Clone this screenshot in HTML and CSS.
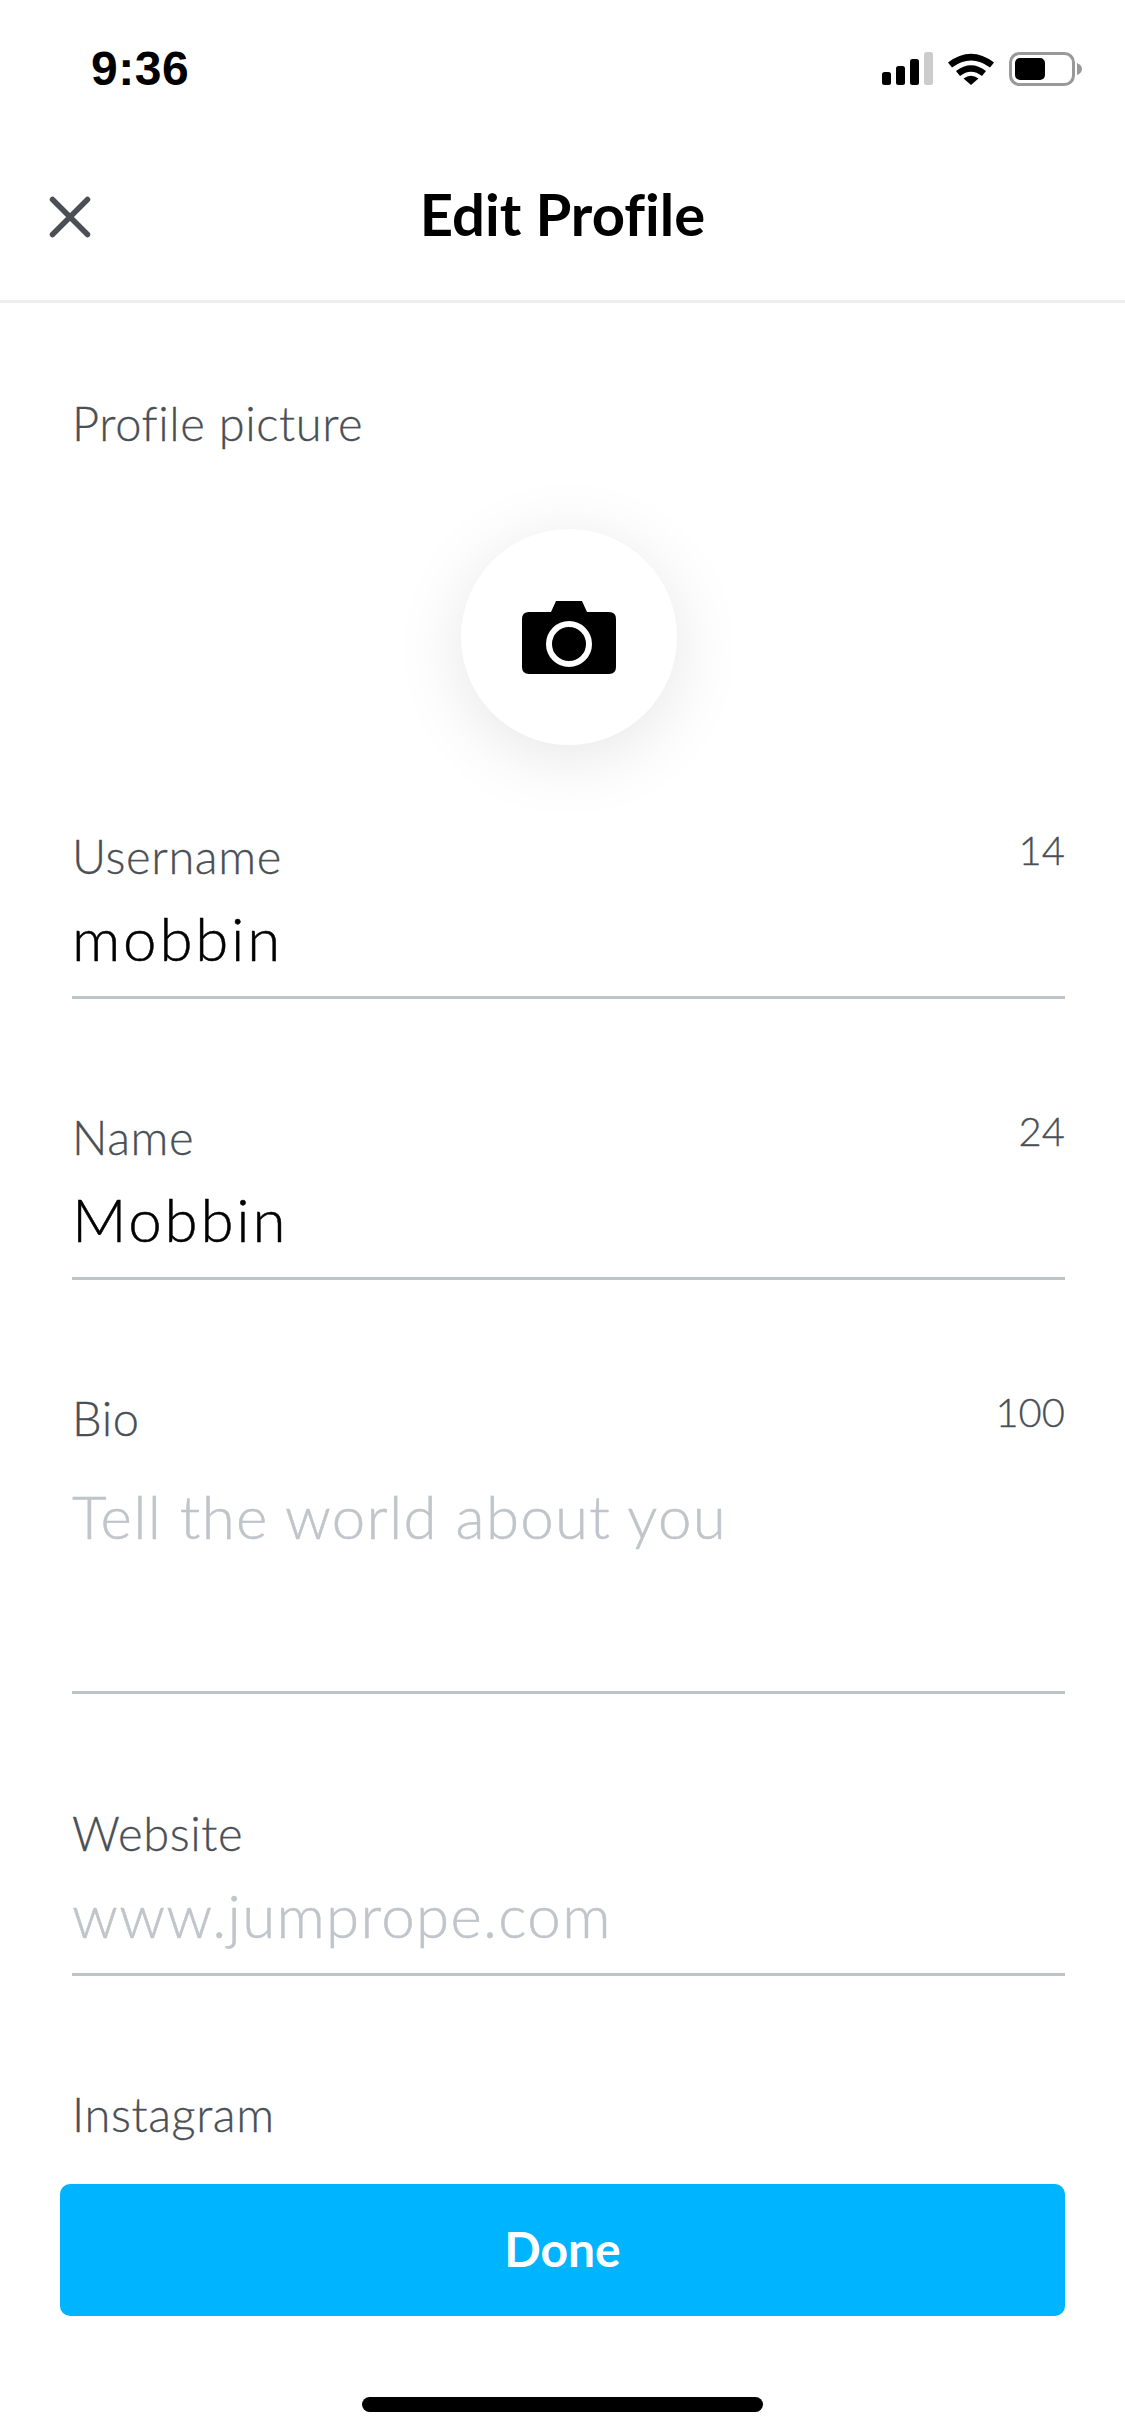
FILE: index.html
```html
<!DOCTYPE html>
<html lang="en">
<head>
  <meta charset="UTF-8">
  <meta name="viewport" content="width=device-width, initial-scale=1.0">
  <title>Edit Profile</title>
  <link rel="stylesheet" href="styles.css">
</head>
<body>
  <div class="screen">
    <div class="status-bar">
      <span class="time">9:36</span>
      <div class="status-icons">
        <svg width="51" height="33" viewBox="0 0 51 33">
          <rect x="0" y="20" width="9" height="13" rx="2.5" fill="#000"/>
          <rect x="14" y="14" width="9" height="19" rx="2.5" fill="#000"/>
          <rect x="28" y="7" width="9" height="26" rx="2.5" fill="#000"/>
          <rect x="42" y="0" width="9" height="33" rx="2.5" fill="#ccc"/>
        </svg>
        <svg width="46" height="33" viewBox="0 0 46 33">
          <path d="M0 10.500 Q23 -7 46 10.500 L42 15.500 Q23 1.500 4 15.500 Z" fill="#000"/>
          <path d="M8 19 Q23 7.500 38 19 L34 24 Q23 15.500 12 24 Z" fill="#000"/>
          <path d="M15.500 26.500 Q23 21 30.500 26.500 L23 33 Z" fill="#000"/>
        </svg>
        <svg width="73" height="34" viewBox="0 0 73 34">
          <rect x="1.500" y="1.500" width="63" height="31" rx="9" fill="none" stroke="#999" stroke-width="3"/>
          <rect x="6" y="6" width="30" height="22" rx="5" fill="#000"/>
          <path d="M68 11 Q73 13 73 17 Q73 21 68 23 Z" fill="#999"/>
        </svg>
      </div>
    </div>

    <header class="nav">
      <svg class="close" width="42" height="42" viewBox="0 0 42 42">
        <path d="M3.500 3.500 L38.500 38.500 M38.500 3.500 L3.500 38.500" stroke="#4a4f55" stroke-width="5.500" stroke-linecap="round"/>
      </svg>
      <h1>Edit Profile</h1>
    </header>

    <main class="content">
      <div class="section-label">Profile picture</div>
      <div class="avatar-row">
        <div class="avatar">
          <svg width="94" height="73" viewBox="0 0 94 73">
            <path d="M29 11 L34 0 H60 L65 11 H87 Q94 11 94 18 V66 Q94 73 87 73 H7 Q0 73 0 66 V18 Q0 11 7 11 Z" fill="#000"/>
            <circle cx="47" cy="43" r="20" fill="none" stroke="#fff" stroke-width="6"/>
          </svg>
        </div>
      </div>

      <div class="field field-username">
        <div class="field-top"><label>Username</label><span class="count">14</span></div>
        <div class="value">mobbin</div>
      </div>
      <div class="field">
        <div class="field-top"><label>Name</label><span class="count">24</span></div>
        <div class="value">Mobbin</div>
      </div>
      <div class="field field-bio">
        <div class="field-top"><label>Bio</label><span class="count">100</span></div>
        <div class="value placeholder">Tell the world about you</div>
      </div>
      <div class="field field-website">
        <div class="field-top"><label>Website</label></div>
        <div class="value placeholder">www.jumprope.com</div>
      </div>
      <div class="field">
        <div class="field-top"><label>Instagram</label></div>
      </div>
    </main>

    <div class="footer">
      <button type="button" class="btn-done">Done</button>
      <div class="home-bar"></div>
    </div>
  </div>
</body>
</html>
```

FILE: styles.css
```css
* {
  box-sizing: border-box;
}
html, body {
  margin: 0;
  padding: 0;
  background: #fff;
}
body {
  font-family: "Lato", "Open Sans", sans-serif;
  font-variant-ligatures: none;
  color: #000;
}
.screen {
  position: relative;
  width: 1125px;
  height: 2436px;
  overflow: hidden;
  display: flex;
  flex-direction: column;
}
.status-bar {
  height: 110px;
  padding: 46px 43px 0 91px;
  display: flex;
  justify-content: space-between;
  align-items: flex-start;
}
.time {
  font-family: "Liberation Sans", Arial, sans-serif;
  font-size: 48px;
  line-height: 46px;
  font-weight: 700;
  letter-spacing: 0.5px;
}
.status-icons {
  display: flex;
  align-items: flex-start;
  gap: 15px;
  padding-top: 6px;
}
.nav {
  position: relative;
  height: 193px;
  display: flex;
  align-items: center;
  justify-content: center;
  padding-top: 17px;
  border-bottom: 3px solid #eee;
}
.nav h1 {
  margin: 0;
  font-size: 58px;
  font-weight: 700;
}
.close {
  position: absolute;
  left: 49px;
  top: 86px;
}
.content {
  padding: 95px 60px 0 72px;
}
.section-label,
.field-top label {
  font-size: 47px;
  line-height: 50px;
  font-weight: 300;
  letter-spacing: 0.6px;
  color: #4a4f55;
  -webkit-text-stroke: 0.3px #4a4f55;
}
.avatar-row {
  display: flex;
  justify-content: center;
  margin-top: 81px;
}
.avatar {
  width: 216px;
  height: 216px;
  border-radius: 50%;
  background: #fff;
  box-shadow: 0 12px 70px rgba(0, 0, 0, 0.1);
  display: flex;
  align-items: center;
  justify-content: center;
}
.field {
  height: 281px;
}
.field-username {
  margin-top: 86px;
}
.field-bio {
  height: 415px;
}
.field-bio .value {
  height: 251px;
  padding-top: 38px;
}
.field-top {
  display: flex;
  justify-content: space-between;
  align-items: flex-start;
}
.count {
  font-size: 40px;
  line-height: 40px;
  font-weight: 300;
  color: #4a4f55;
  -webkit-text-stroke: 0.3px #4a4f55;
  margin-top: -1px;
}
.value {
  height: 118px;
  padding-top: 22px;
  font-size: 60px;
  line-height: 70px;
  font-weight: 300;
  letter-spacing: 2.8px;
  -webkit-text-stroke: 0.5px #000;
  border-bottom: 3px solid #bfc4c8;
}
.placeholder {
  color: #bfc5cb;
  letter-spacing: 1.3px;
  -webkit-text-stroke: 0.5px #bfc5cb;
}
.footer {
  position: absolute;
  left: 0;
  right: 0;
  bottom: 0;
  padding: 0 60px 24px;
  display: flex;
  flex-direction: column;
  align-items: center;
}
.btn-done {
  width: 1005px;
  height: 132px;
  padding: 0 0 4px;
  border: none;
  border-radius: 10px;
  background: #00b4ff;
  color: #fff;
  font-family: inherit;
  font-size: 48px;
  font-weight: 700;
  cursor: pointer;
}
.home-bar {
  width: 401px;
  height: 15px;
  margin-top: 81px;
  border-radius: 8px;
  background: #000;
}
```
